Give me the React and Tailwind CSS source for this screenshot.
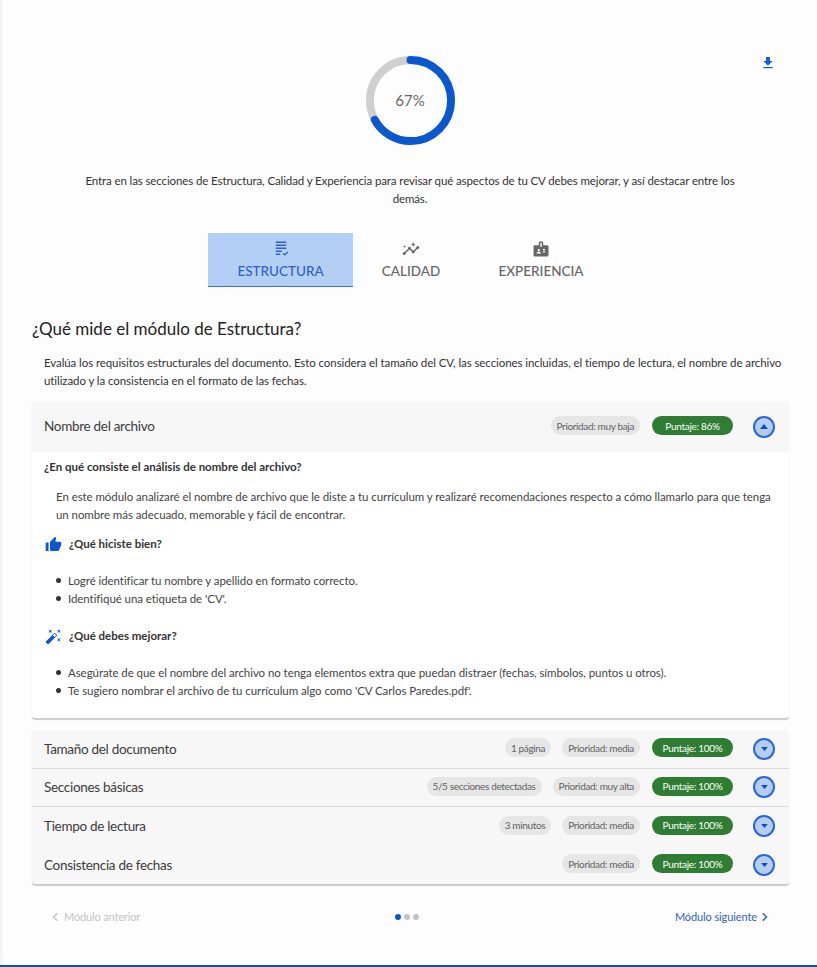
import React from 'react'

const ICONS = {
  download: 'M19 9h-4V3H9v6H5l7 7 7-7zM5 18v2h14v-2H5z',
  thumb: 'M1 21h4V9H1v12zm22-11c0-1.1-.9-2-2-2h-6.31l.95-4.57.03-.32c0-.41-.17-.79-.44-1.06L14.17 1 7.59 7.59C7.22 7.95 7 8.45 7 9v10c0 1.1.9 2 2 2h9c.83 0 1.54-.5 1.84-1.22l3.02-7.05c.09-.23.14-.47.14-.73v-2z',
  wand: 'M7.5 5.6 10 7 8.6 4.5 10 2 7.5 3.4 5 2l1.4 2.5L5 7zm12 9.8L17 14l1.4 2.5L17 19l2.5-1.4L22 19l-1.4-2.5L22 14zM22 2l-2.5 1.4L17 2l1.4 2.5L17 7l2.5-1.4L22 7l-1.4-2.5zm-7.63 5.29a.9959.9959 0 0 0-1.41 0L1.29 18.96c-.39.39-.39 1.02 0 1.41l2.34 2.34c.39.39 1.02.39 1.41 0L16.7 11.05c.39-.39.39-1.02 0-1.41l-2.33-2.35zm-1.03 5.49-2.12-2.12 2.44-2.44 2.12 2.12-2.44 2.44z',
  badge: 'M20 7h-5V4c0-1.1-.9-2-2-2h-2c-1.1 0-2 .9-2 2v3H4c-1.1 0-2 .9-2 2v11c0 1.1.9 2 2 2h16c1.1 0 2-.9 2-2V9c0-1.1-.9-2-2-2zM9 12c.83 0 1.5.67 1.5 1.5S9.83 15 9 15s-1.5-.67-1.5-1.5S8.17 12 9 12zm3 6H6v-.43c0-.6.36-1.15.92-1.39.64-.28 1.34-.43 2.08-.43s1.44.15 2.08.43c.55.24.92.78.92 1.39V18zm1-9h-2V4h2v5zm4.5 7.5h-3V15h3v1.5zm0-3h-3V12h3v1.5z',
  insights: 'M21 8c-1.45 0-2.26 1.44-1.93 2.51l-3.55 3.56c-.3-.09-.74-.09-1.04 0l-2.55-2.55C12.27 10.45 11.46 9 10 9c-1.45 0-2.27 1.44-1.93 2.52l-4.56 4.55C2.44 15.74 1 16.55 1 18c0 1.1.9 2 2 2 1.45 0 2.26-1.44 1.93-2.51l4.55-4.56c.3.09.74.09 1.04 0l2.55 2.55C12.73 16.55 13.54 18 15 18c1.45 0 2.27-1.44 1.93-2.52l3.56-3.55c1.07.33 2.51-.48 2.51-1.93 0-1.1-.9-2-2-2zM15 9l.94-2.07L18 6l-2.06-.93L15 3l-.92 2.07L12 6l2.08.93zM3.5 11 4 9l2-.5L4 8l-.5-2L3 8l-2 .5L3 9z',
  list: 'M5 2h14v2H5zM5 6h14v2H5zM5 10h14v2H5zM5 14h8v2H5zM5 18h6v2H5zM14.2 18.2l1.2-1.2 1.6 1.6 3.3-3.3 1.2 1.2-4.5 4.5z',
}

function Icon({ name, className }) {
  return (
    <svg viewBox="0 0 24 24" fill="currentColor" className={className}>
      <path d={ICONS[name]} />
    </svg>
  )
}

function Pill({ children }) {
  return (
    <span className="h-[19px] px-[6px] flex items-center rounded-full bg-[#e6e6e6] text-[#616161] text-[10px] tracking-[-0.35px] leading-none whitespace-nowrap">
      {children}
    </span>
  )
}

function Score({ children }) {
  return (
    <span className="h-[19px] w-[81px] flex items-center justify-center rounded-full bg-[#2e7d32] text-white text-[10px] tracking-[-0.3px] leading-none whitespace-nowrap">
      {children}
    </span>
  )
}

function Toggle({ open }) {
  return (
    <span className="w-[22px] h-[22px] ml-[20px] flex items-center justify-center rounded-full border-2 border-[#2a66d8] bg-[#b3cdf5]">
      <svg viewBox="0 0 10 6" className={open ? 'w-[8px] h-[5px] text-[#0b4fb8]' : 'w-[7px] h-[4px] text-[#0b4fb8] rotate-180'} fill="currentColor">
        <path d="M5 0l5 6H0z" />
      </svg>
    </span>
  )
}

function Row({ title, tags, score, border }) {
  return (
    <div className={border ? 'h-[38.5px] flex items-center pl-[12px] pr-[14px] border-b border-[#d8d8d8]' : 'h-[38.5px] flex items-center pl-[12px] pr-[14px]'}>
      <span className="text-[13.5px] tracking-[-0.3px] text-[#3c3c3c] flex-1">{title}</span>
      <div className="flex items-center gap-[11px] mb-[2px]">
        {tags.map((t) => <Pill key={t}>{t}</Pill>)}
        <span className="ml-[1px]"><Score>{score}</Score></span>
      </div>
      <Toggle />
    </div>
  )
}

function Tab({ icon, label, active, className }) {
  return (
    <div className={`${className} h-[54px] flex flex-col items-center pt-[7px] ${active ? 'bg-[#b3cff5] text-[#2f62c9] border-b border-[#3b6fd0]' : 'text-[#666666]'}`}>
      <Icon name={icon} className="w-[18px] h-[18px]" />
      <span className="text-[13.5px] font-medium leading-[20px] mt-[3px]">{label}</span>
    </div>
  )
}

function Dot() {
  return <span className="w-[5px] h-[5px] mt-[6px] rounded-full bg-[#333333] shrink-0" />
}

export default function App() {
  return (
    <div className="h-[967px] bg-[#f0f6fb] pl-[3px] flex flex-col text-[#333333] overflow-hidden" style={{ fontFamily: 'Lato, sans-serif' }}>
      <div className="flex-1 bg-[#fdfdfe] flex flex-col">
        {/* top: ring and intro */}
        <div className="relative flex flex-col items-center pt-[54px]">
          <button className="absolute right-[41px] top-[55px] text-[#1a5fd6]">
            <Icon name="download" className="w-[16px] h-[16px]" />
          </button>
          <div className="relative w-[91px] h-[92px] flex items-center">
            <svg viewBox="0 0 92 92" className="w-[91px] h-[91px] -rotate-90">
              <circle cx="46" cy="46" r="41" fill="none" stroke="#cfcfcf" strokeWidth="8" />
              <circle cx="46" cy="46" r="41" fill="none" stroke="#0a58d0" strokeWidth="8" strokeLinecap="round" strokeDasharray="172.6 257.6" />
            </svg>
            <span className="absolute inset-0 flex items-center justify-center text-[15px] text-[#666666]">67%</span>
          </div>
          <p className="w-[670px] mt-[26px] text-center text-[11.5px] tracking-[-0.11px] leading-[18px] text-[#333333]">
            Entra en las secciones de Estructura, Calidad y Experiencia para revisar qué aspectos de tu CV debes mejorar, y así destacar entre los demás.
          </p>
          <div className="flex self-start ml-[205px] mt-[25px]">
            <Tab icon="list" label="ESTRUCTURA" active className="w-[145px]" />
            <Tab icon="insights" label="CALIDAD" className="w-[116px]" />
            <Tab icon="badge" label="EXPERIENCIA" className="w-[144px]" />
          </div>
        </div>

        {/* module */}
        <div className="pl-[29px] pr-[28px]">
          <h2 className="mt-[29px] text-[17px] leading-[26px] text-[#222222]">¿Qué mide el módulo de Estructura?</h2>
          <p className="mt-[12px] pl-[12px] text-[11.5px] tracking-[-0.085px] leading-[18px] text-[#333333]">
            Evalúa los requisitos estructurales del documento. Esto considera el tamaño del CV, las secciones incluidas, el tiempo de lectura, el nombre de archivo utilizado y la consistencia en el formato de las fechas.
          </p>

          <div className="mt-[11px] bg-white rounded-[3px] shadow-[0_2px_1px_rgba(0,0,0,0.2)]">
            <div className="h-[51px] bg-[#f7f7f7] flex items-center pl-[12px] pr-[14px]">
              <span className="text-[13.5px] tracking-[-0.3px] text-[#3c3c3c] flex-1">Nombre del archivo</span>
              <div className="flex items-center gap-[12px] mb-[2px]">
                <Pill>Prioridad: muy baja</Pill>
                <Score>Puntaje: 86%</Score>
              </div>
              <Toggle open />
            </div>
            <div className="h-[266px] pl-[12px] pr-[12px] pt-[6px] text-[11.5px] tracking-[-0.07px]">
              <h3 className="font-bold text-[11.5px] leading-[18px] text-[#333333] tracking-normal">¿En qué consiste el análisis de nombre del archivo?</h3>
              <p className="mt-[12px] pl-[12px] leading-[18px] text-[#444444]">
                En este módulo analizaré el nombre de archivo que le diste a tu currículum y realizaré recomendaciones respecto a cómo llamarlo para que tenga un nombre más adecuado, memorable y fácil de encontrar.
              </p>
              <div className="mt-[10px] ml-[1px] flex items-center gap-[7px] h-[20px]">
                <Icon name="thumb" className="w-[17px] h-[17px] text-[#0a58d0]" />
                <span className="font-bold text-[11.5px] tracking-normal text-[#333333]">¿Qué hiciste bien?</span>
              </div>
              <ul className="mt-[18px] pl-[12px] leading-[18px] text-[#444444]">
                <li className="flex gap-[7px]"><Dot />Logré identificar tu nombre y apellido en formato correcto.</li>
                <li className="flex gap-[7px]"><Dot />Identifiqué una etiqueta de 'CV'.</li>
              </ul>
              <div className="mt-[18px] ml-[1px] flex items-center gap-[7px] h-[20px]">
                <Icon name="wand" className="w-[17px] h-[17px] text-[#0a58d0]" />
                <span className="font-bold text-[11.5px] tracking-normal text-[#333333]">¿Qué debes mejorar?</span>
              </div>
              <ul className="mt-[18px] pl-[12px] leading-[18px] text-[#444444]">
                <li className="flex gap-[7px]"><Dot />Asegúrate de que el nombre del archivo no tenga elementos extra que puedan distraer (fechas, símbolos, puntos u otros).</li>
                <li className="flex gap-[7px]"><Dot />Te sugiero nombrar el archivo de tu currículum algo como 'CV Carlos Paredes.pdf'.</li>
              </ul>
            </div>
          </div>

          <div className="mt-[12px] bg-[#f7f7f7] rounded-[3px] shadow-[0_2px_1px_rgba(0,0,0,0.2)]">
            <Row title="Tamaño del documento" tags={['1 página', 'Prioridad: media']} score="Puntaje: 100%" border />
            <Row title="Secciones básicas" tags={['5/5 secciones detectadas', 'Prioridad: muy alta']} score="Puntaje: 100%" border />
            <Row title="Tiempo de lectura" tags={['3 minutos', 'Prioridad: media']} score="Puntaje: 100%" />
            <Row title="Consistencia de fechas" tags={['Prioridad: media']} score="Puntaje: 100%" />
          </div>

          {/* pagination */}
          <div className="mt-[24px] h-[18px] flex items-center justify-between pl-[20px] pr-[21px] text-[11px] tracking-[-0.1px]">
            <span className="flex items-center gap-[6px] text-[#c4c4c4] tracking-[-0.15px]">
              <svg viewBox="0 0 8 12" className="w-[6px] h-[10px]" fill="none" stroke="currentColor" strokeWidth="2"><path d="M7 1L2 6l5 5" /></svg>
              Módulo anterior
            </span>
            <span className="flex items-center gap-[3px] mr-[1px]">
              <span className="w-[6px] h-[6px] rounded-full bg-[#0a58d0]" />
              <span className="w-[6px] h-[6px] rounded-full bg-[#c4c4c4]" />
              <span className="w-[6px] h-[6px] rounded-full bg-[#c4c4c4]" />
            </span>
            <span className="flex items-center gap-[5px] text-[#2f62c9]">
              Módulo siguiente
              <svg viewBox="0 0 8 12" className="w-[6px] h-[10px]" fill="none" stroke="currentColor" strokeWidth="2"><path d="M1 1l5 5-5 5" /></svg>
            </span>
          </div>
        </div>
      </div>
      <div className="h-[2px] bg-[#0d52b5] -ml-[3px]" />
    </div>
  )
}
